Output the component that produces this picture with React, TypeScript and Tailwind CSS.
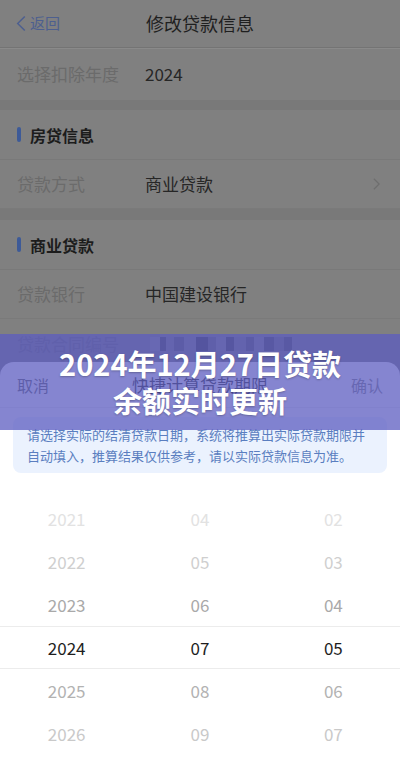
import React from "react";

const FONT = { fontFamily: '"Noto Sans CJK SC", "Noto Sans", sans-serif' };

function Row({ label, value, arrow }: { label: string; value?: React.ReactNode; arrow?: boolean }) {
    return (
        <div className="flex h-[49px] items-center px-[17px] border-b border-[#7a7a7a]">
            <div className="w-[128px] text-[17px] text-[#6b6b6b]">{label}</div>
            <div className="flex-1 text-[17px] text-[#262626]">{value}</div>
            {arrow && (
                <svg viewBox="0 0 10 16" className="h-[14px] w-[9px] mr-[2px]" fill="none" stroke="#6e6e6e" strokeWidth="1.4">
                    <path d="M2 2l6 6-6 6" />
                </svg>
            )}
        </div>
    );
}

function Section({ title }: { title: string }) {
    return (
        <div className="flex h-[50px] items-center gap-[9px] px-[17px] border-b border-[#797979]">
            <span className="h-[15px] w-[4px] rounded-full bg-[#3d5a98]" />
            <span className="text-[16px] font-bold text-[#1c1c1c]">{title}</span>
        </div>
    );
}

const years = ["2021", "2022", "2023", "2024", "2025", "2026"];
const months = ["04", "05", "06", "07", "08", "09"];
const days = ["02", "03", "04", "05", "06", "07"];
const tones = ["text-[#e2e2e2]", "text-[#cfcfcf]", "text-[#a9a9a9]", "text-[#1e1e1e]", "text-[#b2b2b2]", "text-[#c9c9c9]"];

const mosaic = [
    ["#8a8a8a", 10], ["#4a4a4a", 6], ["#7c7c7c", 8], ["#5e5e5e", 10], ["#808080", 12],
    ["#3f3f3f", 12], ["#6a6a6a", 8], ["#858585", 10], ["#454545", 8], ["#777", 12],
    ["#5a5a5a", 8], ["#838383", 10], ["#4d4d4d", 10], ["#6f6f6f", 10], ["#505050", 8],
] as const;

export default function App() {
    return (
        <div className="relative h-[766px] w-[400px] overflow-hidden bg-[#808080]" style={FONT}>
            {/* page behind the sheet (dimmed) */}
            <div className="grid h-[48px] grid-cols-3 items-center border-b border-[#747474] shadow-[0_1px_0_#8a8a8a]">
                <div className="flex items-center gap-[3px] pl-[15px] text-[15px] text-[#4d5f8f]">
                    <svg viewBox="0 0 12 18" className="h-[17px] w-[12px]" fill="none" stroke="#4d5f8f" strokeWidth="1.6">
                        <path d="M10 1.5L2.5 9l7.5 7.5" />
                    </svg>
                    <span>返回</span>
                </div>
                <div className="text-center text-[18px] text-[#1f1f1f] whitespace-nowrap">修改贷款信息</div>
                <div />
            </div>
            <div className="flex h-[52px] items-center px-[17px]">
                <div className="w-[128px] text-[17px] text-[#6b6b6b]">选择扣除年度</div>
                <div className="text-[17px] text-[#262626]">2024</div>
            </div>
            <div className="h-[10px] bg-[#797979]" />
            <Section title="房贷信息" />
            <Row label="贷款方式" value="商业贷款" arrow />
            <div className="h-[11px] bg-[#797979]" />
            <Section title="商业贷款" />
            <Row label="贷款银行" value="中国建设银行" />
            <div className="flex h-[49px] items-center px-[17px]">
                <div className="w-[133px] text-[17px] text-[#6b6b6b]">贷款合同编号</div>
                <div className="flex h-[14px] items-stretch">
                    {mosaic.map(([c, w], i) => (
                        <span key={i} className="block" style={{ background: c, width: w }} />
                    ))}
                </div>
            </div>

            {/* bottom sheet */}
            <div className="absolute inset-x-0 top-[362px] bottom-0 rounded-t-[14px] bg-white">
                <div className="flex h-[46px] items-center justify-between border-b border-[#eeeeee] px-[17px]">
                    <span className="text-[16px] text-[#666]">取消</span>
                    <span className="text-[17px] text-[#333]">快捷计算贷款期限</span>
                    <span className="text-[16px] text-[#888]">确认</span>
                </div>
                <div className="mx-[13px] mt-[9px] rounded-lg bg-[#ebf2fe] px-[14px] py-[7px] text-[13px] leading-[21px] text-[#5a7ec0]">
                    请选择实际的结清贷款日期，系统将推算出实际贷款期限并
                    <br />
                    自动填入，推算结果仅供参考，请以实际贷款信息为准。
                </div>
                <div className="mt-[24px] grid grid-cols-3">
                    {[years, months, days].map((col, ci) => (
                        <div key={ci} className="flex flex-col">
                            {col.map((v, i) => (
                                <div
                                    key={v}
                                    className={`flex h-[43px] items-center justify-center text-[17px] ${tones[i]} ${
                                        i === 3 ? "border-y border-[#ececec]" : ""
                                    }`}
                                >
                                    {v}
                                </div>
                            ))}
                        </div>
                    ))}
                </div>
            </div>

            {/* promo banner over everything */}
            <div className="absolute inset-x-0 top-[334px] flex h-[96px] flex-col items-center justify-center bg-[rgba(92,92,192,0.75)]">
                <div className="text-[29px] font-bold leading-[37px] text-white [text-shadow:0_1px_2px_rgba(0,0,0,0.25)]">
                    2024年12月27日贷款
                </div>
                <div className="text-[29px] font-bold leading-[37px] text-white [text-shadow:0_1px_2px_rgba(0,0,0,0.25)]">
                    余额实时更新
                </div>
            </div>
        </div>
    );
}
